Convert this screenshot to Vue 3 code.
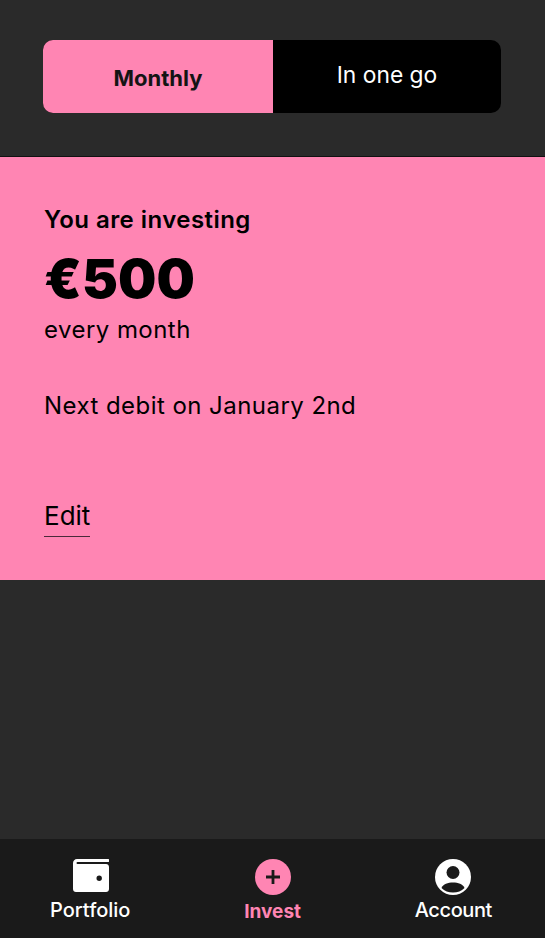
<template>
    <div class="screen">
        <div class="switch">
            <button class="switch__option switch__option--active">Monthly</button>
            <button class="switch__option">In one go</button>
        </div>

        <section class="summary">
            <p class="summary__title">You are investing</p>
            <p class="summary__amount">€500</p>
            <p class="summary__text">every month</p>
            <p class="summary__text summary__text--next">Next debit on January 2nd</p>
            <a class="summary__edit">Edit</a>
        </section>

        <nav class="tabs">
            <a class="tabs__item tabs__item--portfolio">
                <svg width="36" height="36" viewBox="0 0 36 36">
                    <path fill="#fff" fill-rule="evenodd" d="M4 0H35A1.500 1.500 0 0 1 35 3H4.500A1 1 0 0 0 4.500 5H33C34.700 5 36 6.300 36 8V30C36 31.700 34.700 33 33 33H3C1.300 33 0 31.700 0 30V4C0 1.800 1.800 0 4 0ZM23.500 19.300A2.700 2.700 0 1 0 28.900 19.300A2.700 2.700 0 1 0 23.500 19.300Z" />
                </svg>
                <span>Portfolio</span>
            </a>
            <a class="tabs__item tabs__item--active">
                <svg width="36" height="36" viewBox="0 0 36 36">
                    <circle cx="18" cy="18" r="18" fill="#ff85b3" />
                    <path d="M18 11V25M11 18H25" stroke="#1a1a1a" stroke-width="2.800" />
                </svg>
                <span>Invest</span>
            </a>
            <a class="tabs__item tabs__item--account">
                <svg width="36" height="36" viewBox="0 0 36 36">
                    <circle cx="18" cy="18" r="18" fill="#fff" />
                    <circle cx="18" cy="13.500" r="6.500" fill="#1a1a1a" />
                    <path fill="#1a1a1a" d="M6.500 29C8 25 13 23.500 18 23.500S28 25 29.500 29C26.500 32 22.500 33.500 18 33.500S9.500 32 6.500 29Z" />
                </svg>
                <span>Account</span>
            </a>
        </nav>
    </div>
</template>

<script setup>
</script>

<style>
html,
body {
    margin: 0;
    background: #2a2a2a;
}
</style>

<style scoped>
.screen {
    display: flex;
    flex-direction: column;
    height: 938px;
    background: #2a2a2a;
    color: #000000;
    font-family: "Inter", "Liberation Sans", sans-serif;
}

.switch {
    display: flex;
    height: 73px;
    margin: 40px 44px 43px 43px;
    border-radius: 10px;
    background: #000000;
    overflow: hidden;
}

.switch__option {
    flex: 1;
    padding: 0 0 5px;
    border: 0;
    background: transparent;
    color: #ffffff;
    font-family: inherit;
    font-size: 22.8px;
    font-weight: 400;
}

.switch__option--active {
    flex: 0 0 230px;
    padding: 2px 0 0;
    background: #ff85b3;
    color: #141414;
    font-size: 22px;
    font-weight: 700;
}

.summary {
    height: 424px;
    box-sizing: border-box;
    padding: 48px 44px 0;
    background: #ff85b3;
    border-top: 1px solid #111111;
}

.summary p {
    margin: 0;
}

.summary__title {
    font-size: 24px;
    line-height: 30px;
    font-weight: 600;
    letter-spacing: 0.45px;
}

.summary .summary__amount {
    margin-top: 12px;
    font-size: 54px;
    line-height: 64px;
    font-weight: 900;
    letter-spacing: 0.1px;
}

.summary__text {
    font-size: 24px;
    line-height: 30px;
    letter-spacing: 0.45px;
}

.summary .summary__text {
    margin-top: 4px;
}

.summary .summary__text--next {
    margin-top: 46px;
}

.summary__edit {
    display: inline-block;
    margin-top: 80px;
    padding-bottom: 5px;
    border-bottom: 1px solid #4a2a3a;
    font-size: 26px;
    line-height: 30px;
}

.tabs {
    display: flex;
    justify-content: space-between;
    height: 99px;
    box-sizing: border-box;
    margin-top: auto;
    padding: 20px 53px 0 50px;
    background: #1a1a1a;
}

.tabs__item {
    display: flex;
    flex-direction: column;
    align-items: center;
    gap: 2px;
    color: #ffffff;
    font-size: 20px;
    line-height: 26px;
    font-weight: 500;
}

.tabs__item--portfolio svg {
    margin-left: 2px;
}

.tabs__item--active {
    color: #ff85b3;
    font-weight: 700;
    font-size: 19px;
}

.tabs__item--active span {
    padding-top: 2px;
}

.tabs__item--account {
    letter-spacing: -0.4px;
}
</style>
